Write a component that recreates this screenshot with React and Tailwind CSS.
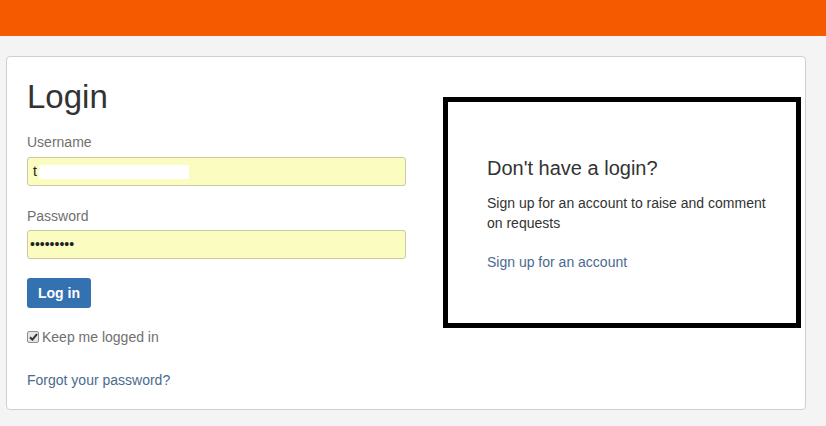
import React from "react";

function Checkmark() {
  return (
    <span className="flex h-[12px] w-[12px] items-center justify-center rounded-[2px] border border-[#8f8f8f] bg-[#e6e6e6]">
      <svg width="9" height="8" viewBox="0 0 9 8">
        <path d="M1 4.2 L3.4 6.6 L8 1.2" fill="none" stroke="#333" strokeWidth="2" />
      </svg>
    </span>
  );
}

export default function App() {
  return (
    <div className="min-h-[426px] bg-[#f4f4f4] font-['Liberation_Sans',Arial,sans-serif]">
      <div className="h-[36px] bg-[#f65a00]" />

      <div className="ml-[6px] mt-[20px] flex h-[354px] w-[800px] rounded-[4px] border border-[#cfcfcf] bg-white">
        {/* Login form */}
        <div className="ml-[20px] w-[379px] pt-[22px]">
          <h1 className="text-[33px] leading-[36px] text-[#333]">Login</h1>

          <label className="mt-[17px] block text-[14px] leading-[20px] text-[#707070]">Username</label>
          <div className="mt-[5px] flex h-[29px] items-center rounded-[3px] border border-[#c9c9a8] bg-[#fafcc0] px-[5px] text-[14px] text-[#222]">
            t<span className="ml-[2px] h-[14px] w-[150px] bg-white" />
          </div>

          <label className="mt-[20px] block text-[14px] leading-[20px] text-[#707070]">Password</label>
          <div className="mt-[4px] flex h-[29px] items-center rounded-[3px] border border-[#c9c9a8] bg-[#fafcc0] px-[2px] text-[14px] text-[#222]">
            •••••••••
          </div>

          <button className="mt-[19px] h-[30px] w-[64px] rounded-[3px] bg-[#3471b0] text-[14px] font-bold text-white">
            Log in
          </button>

          <div className="mt-[19px] flex items-center gap-[3px] text-[14px] leading-[20px] text-[#707070]">
            <Checkmark />
            Keep me logged in
          </div>

          <a className="mt-[23px] block text-[14px] leading-[20px] text-[#4a6a8e]">Forgot your password?</a>
        </div>

        {/* Sign up box */}
        <div className="ml-[37px] mt-[40px] h-[231px] w-[358px] border-[5px] border-black pl-[39px] pt-[54px]">
          <h2 className="text-[20px] leading-[24px] text-[#333]">Don't have a login?</h2>
          <p className="mt-[13px] w-[290px] text-[14px] leading-[20px] text-[#333]">
            Sign up for an account to raise and comment on requests
          </p>
          <a className="mt-[19px] block text-[14px] leading-[20px] text-[#4a6a8e]">Sign up for an account</a>
        </div>
      </div>
    </div>
  );
}
